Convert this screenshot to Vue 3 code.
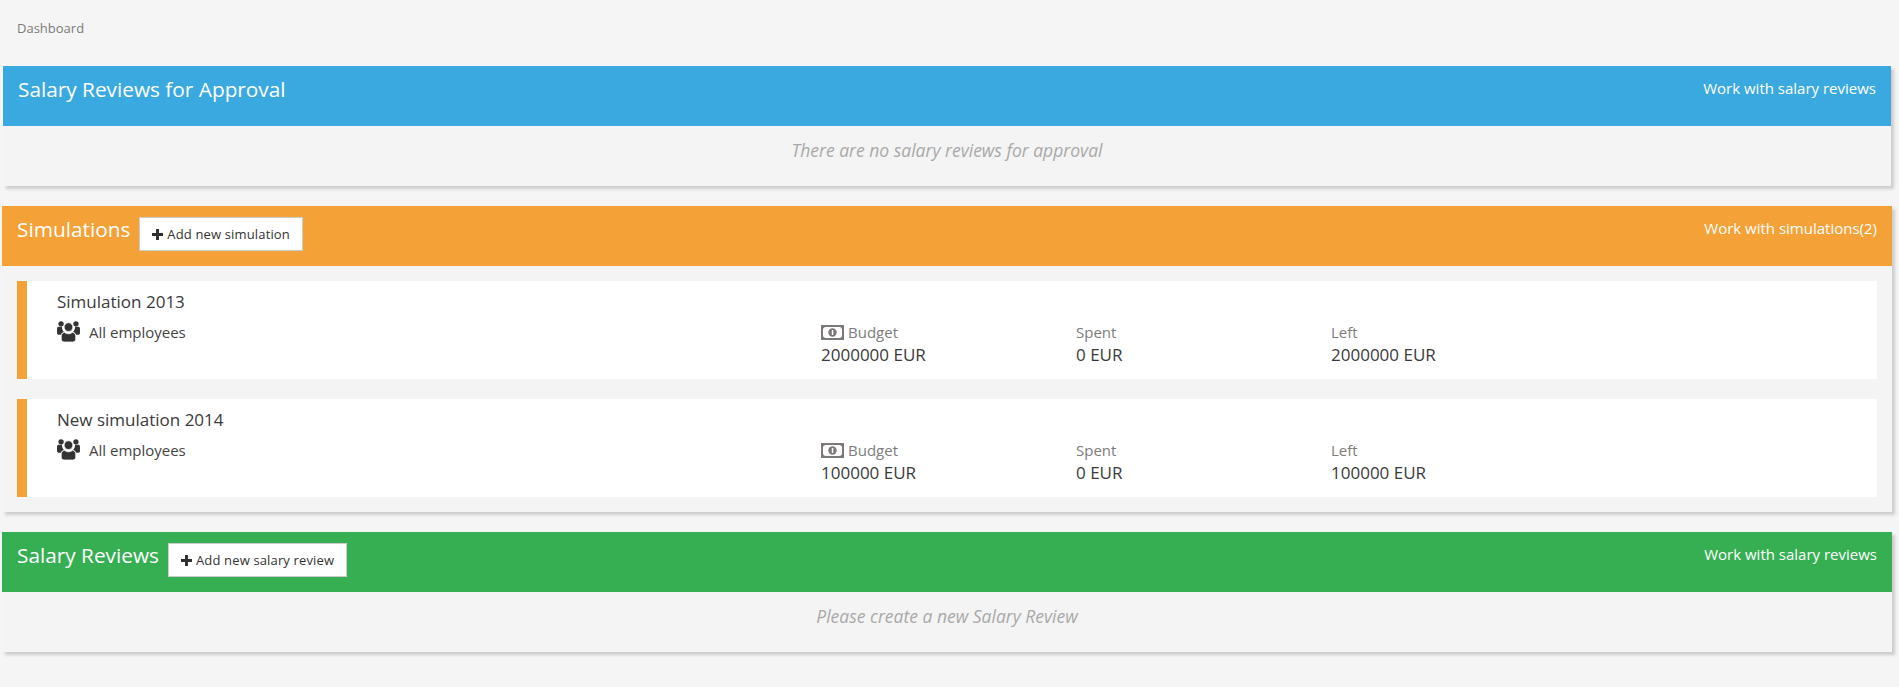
<script setup>
const simulations = [
  { name: 'Simulation 2013', budget: '2000000 EUR', spent: '0 EUR', left: '2000000 EUR' },
  { name: 'New simulation 2014', budget: '100000 EUR', spent: '0 EUR', left: '100000 EUR' }
]
</script>

<template>
  <div class="page">
    <div class="breadcrumb">Dashboard</div>

    <section class="panel approval">
      <header class="panel-head blue">
        <div class="head-left"><h2>Salary Reviews for Approval</h2></div>
        <a class="head-link">Work with salary reviews</a>
      </header>
      <p class="empty">There are no salary reviews for approval</p>
    </section>

    <section class="panel">
      <header class="panel-head orange">
        <div class="head-left">
          <h2>Simulations</h2>
          <button class="add-btn">
            <svg class="plus" viewBox="0 0 12 12"><path d="M4.4 0h3.2v4.4H12v3.2H7.6V12H4.4V7.6H0V4.4h4.4z" /></svg>
            Add new simulation
          </button>
        </div>
        <a class="head-link">Work with simulations(2)</a>
      </header>
      <div class="sim-list">
        <article v-for="sim in simulations" :key="sim.name" class="sim">
          <h3>{{ sim.name }}</h3>
          <div class="sim-grid">
            <div class="who">
              <svg class="users" viewBox="0 0 24 22">
                <circle cx="4.200" cy="3" r="2.800" />
                <circle cx="19.800" cy="3" r="2.800" />
                <path d="M0 8c0-1.200.8-1.900 1.900-1.900h3.300c-.1 2 .5 3.900 1.900 5.300-1.500.6-2.500 1.500-3 2.900H1.500C.6 14.300 0 13.600 0 12.800zM24 8c0-1.200-.8-1.900-1.900-1.900h-3.300c.1 2-.5 3.900-1.900 5.300 1.500.6 2.500 1.500 3 2.900h2.600c.9 0 1.500-.7 1.500-1.500z" />
                <g class="users-front">
                  <circle cx="12" cy="6.400" r="4.600" />
                  <path d="M7.700 11.800c1.200 1 2.700 1.600 4.300 1.600s3.100-.6 4.300-1.600c2 .5 3.300 2 3.300 4.100v3c0 1.900-1.400 3.100-3.200 3.100H7.600c-1.800 0-3.200-1.200-3.200-3.100v-3c0-2.100 1.300-3.600 3.300-4.100z" />
                </g>
              </svg>
              <span>All employees</span>
            </div>
            <div class="stat">
              <span class="label">
                <svg class="money" viewBox="0 0 23 15">
                  <rect width="23" height="15" fill="#7d7979" />
                  <rect x="2" y="2" width="19" height="11" rx="3" fill="#fff" />
                  <circle cx="11.500" cy="7.500" r="4.200" fill="#7d7979" />
                  <rect x="10.800" y="5" width="1.500" height="5" fill="#fff" />
                </svg>
                Budget
              </span>
              <span class="value">{{ sim.budget }}</span>
            </div>
            <div class="stat">
              <span class="label">Spent</span>
              <span class="value">{{ sim.spent }}</span>
            </div>
            <div class="stat">
              <span class="label">Left</span>
              <span class="value">{{ sim.left }}</span>
            </div>
          </div>
        </article>
      </div>
    </section>

    <section class="panel">
      <header class="panel-head green">
        <div class="head-left">
          <h2>Salary Reviews</h2>
          <button class="add-btn">
            <svg class="plus" viewBox="0 0 12 12"><path d="M4.4 0h3.2v4.4H12v3.2H7.6V12H4.4V7.6H0V4.4h4.4z" /></svg>
            Add new salary review
          </button>
        </div>
        <a class="head-link">Work with salary reviews</a>
      </header>
      <p class="empty">Please create a new Salary Review</p>
    </section>
  </div>
</template>

<style>
html, body {
  margin: 0;
  background: #f5f5f5;
}
</style>

<style scoped>
.page {
  height: 687px;
  padding: 0 7px 0 2px;
  box-sizing: border-box;
  overflow: hidden;
  font-family: 'Open Sans', 'Noto Sans', sans-serif;
  color: #333;
}
.breadcrumb {
  height: 66px;
  padding: 19px 0 0 15px;
  box-sizing: border-box;
  font-size: 13px;
  line-height: 18px;
  color: #7b7b7b;
}
.panel {
  margin-bottom: 20px;
  background: #f4f4f4;
  box-shadow: 3px 3px 3px #ccc;
}
.panel.approval {
  margin: 0 1px 20px 1px;
}
.panel-head {
  height: 60px;
  padding: 0 15px;
  display: flex;
  justify-content: space-between;
  color: #fff;
}
.blue { background: #3aa9df; }
.orange { background: #f4a137; }
.green { background: #36af52; }
.head-left {
  display: flex;
  align-items: flex-start;
  gap: 9px;
}
h2 {
  margin: 0;
  padding-top: 8px;
  font-size: 20.800px;
  font-weight: 400;
  line-height: 30px;
}
.add-btn {
  height: 34px;
  margin-top: 11px;
  padding: 0 12px;
  display: flex;
  align-items: center;
  gap: 4px;
  background: #fff;
  border: 1px solid #ccc;
  border-radius: 0;
  font-family: inherit;
  font-size: 13px;
  letter-spacing: 0.15px;
  color: #333;
}
.plus {
  width: 11px;
  height: 11px;
  fill: #2f2f2f;
}
.head-link {
  padding-top: 12px;
  font-size: 15px;
  line-height: 20px;
}
.empty {
  height: 60px;
  margin: 0;
  font-size: 17.500px;
  font-style: italic;
  line-height: 48px;
  text-align: center;
  color: #a9a9a9;
}
.sim-list {
  padding: 15px;
  display: flex;
  flex-direction: column;
  gap: 20px;
}
.sim {
  height: 98px;
  padding-left: 30px;
  box-sizing: border-box;
  background: #fff;
  border-left: 10px solid #f4a137;
}
h3 {
  margin: 0;
  padding-top: 9px;
  font-size: 17px;
  font-weight: 400;
  line-height: 24px;
  color: #3a3a3a;
}
.sim-grid {
  display: grid;
  grid-template-columns: 764px 255px 255px 1fr;
  padding-top: 7px;
}
.who {
  display: flex;
  align-items: flex-start;
  gap: 9px;
  font-size: 15px;
  line-height: 22px;
  color: #444;
}
.users {
  width: 23px;
  height: 21px;
  fill: #333;
}
.users-front {
  stroke: #fff;
  stroke-width: 0.8;
}
.stat {
  display: flex;
  flex-direction: column;
}
.label {
  display: flex;
  align-items: center;
  gap: 4px;
  font-size: 15px;
  line-height: 22px;
  color: #7d7d7d;
}
.money {
  width: 23px;
  height: 15px;
}
.value {
  font-size: 17px;
  line-height: 24px;
  color: #3a3a3a;
}
</style>
